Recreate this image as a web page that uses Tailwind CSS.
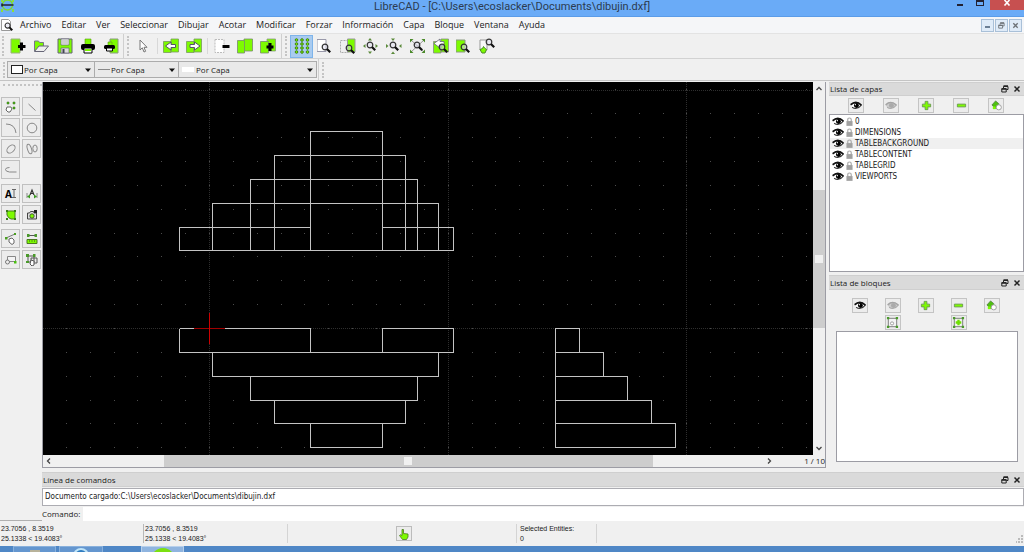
<!DOCTYPE html>
<html lang="es">
<head>
    <meta charset="UTF-8">
    <meta name="viewport" content="width=device-width, initial-scale=1.0">
    <title>LibreCAD - [C:\Users\ecoslacker\Documents\dibujin.dxf]</title>
    <script src="https://cdn.jsdelivr.net/npm/@tailwindcss/browser@4"></script>
</head>
<body class="h-screen overflow-hidden flex flex-col bg-[#f0f0f0] text-[#1a1a1a] font-['Open_Sans','Noto_Sans',sans-serif] text-[8px] leading-[12px]">

    <!-- Icon set -->
    <svg class="hidden">
        <defs>
            <symbol id="i-lens" viewBox="0 0 10 10"><circle cx="4" cy="4" r="2.800" fill="#dde" fill-opacity=".5" stroke="#333" stroke-width="1.200"/><path d="M6 6l3.200 3.200" stroke="#111" stroke-width="2.200"/></symbol>
            <symbol id="i-new" viewBox="0 0 16 16"><path d="M1 1h9v14H1z" fill="#7dfb00" stroke="#9ab080"/><path d="M11.500 4.500v8M8 8.500h7.500" stroke="#000" stroke-width="3"/></symbol>
            <symbol id="i-open" viewBox="0 0 16 16"><path d="M1.500 13V3h4l1 1.500h4V8" fill="#7dfb00" stroke="#778"/><path d="M1.500 13.500L6 8h9.500L11 13.500z" fill="#eee" stroke="#667"/></symbol>
            <symbol id="i-save" viewBox="0 0 16 16"><path d="M1 1h14v14H1z" fill="#7dfb00" stroke="#667"/><path d="M4 1h8v6H4z" fill="#f4f4f4" stroke="#667" stroke-width=".7"/><path d="M4 10h8v5H4z" fill="#ddd" stroke="#667" stroke-width=".7"/><path d="M5.500 11h2v4h-2z" fill="#445"/><path d="M5 3h6M5 5h6" stroke="#aaa"/></symbol>
            <symbol id="i-print" viewBox="0 0 16 16"><path d="M5 1h6v6H5z" fill="#7dfb00" stroke="#5a9a10" stroke-width=".6"/><rect x="1" y="6" width="14" height="6" rx="2"/><path d="M4 10h8v5H4z" fill="#fff" stroke="#000"/><path d="M5 11h6v2H5z" fill="#7dfb00"/></symbol>
            <symbol id="i-preview" viewBox="0 0 16 16"><path d="M7 1h8v14H7z" fill="#7dfb00" stroke="#8a9a80"/><path d="M5 4h4v4H5z" fill="#7dfb00" stroke="#5a9a10" stroke-width=".6"/><rect x="1" y="7" width="11" height="4" rx="1.500"/><path d="M3.500 10h6v3h-6z" fill="#fff" stroke="#000"/></symbol>
            <symbol id="i-cursor" viewBox="0 0 16 16"><path d="M5 2v10l2.300-2.200L9 14l1.600-.7L9 9.300h3z" fill="#fff" stroke="#777"/></symbol>
            <symbol id="i-prev" viewBox="0 0 16 16"><path d="M.5 3.500H8v11H.5zM8 1h7.500v13H8z" fill="#7dfb00" stroke="#7a9a60" stroke-width=".8"/><path d="M2.500 8l5.500-4v2.500h4.500v3H8V12z" fill="#fff" stroke="#556"/></symbol>
            <symbol id="i-next" viewBox="0 0 16 16"><path d="M.5 3.500H8v11H.5zM8 1h7.500v13H8z" fill="#7dfb00" stroke="#7a9a60" stroke-width=".8"/><path d="M14 8L8.500 4v2.500H4v3h4.500V12z" fill="#fff" stroke="#556"/></symbol>
            <symbol id="i-minuspage" viewBox="0 0 16 16"><path d="M1 1.500h9v13H1z" fill="#fff" stroke="#bbb" stroke-dasharray="2 1"/><path d="M8.500 8.500h7" stroke="#000" stroke-width="3"/></symbol>
            <symbol id="i-pages" viewBox="0 0 16 16"><path d="M7 1h8.500v12H7z" fill="#7dfb00" stroke="#7a8a70" stroke-width=".8"/><path d="M.5 2.500H7.500v12.500H.5z" fill="#7dfb00" stroke="#7a8a70" stroke-width=".8"/></symbol>
            <symbol id="i-pagesplus" viewBox="0 0 16 16"><path d="M7 1h8.500v12H7z" fill="#7dfb00" stroke="#8a9a80" stroke-width=".8"/><path d="M.5 3.500h8v11.500h-8z" fill="#7dfb00" stroke="#7a8a70" stroke-width=".8"/><path d="M10 5v8M6.500 9h7" stroke="#000" stroke-width="3"/></symbol>
            <symbol id="i-grid" viewBox="0 0 16 16"><g fill="#7dfb00" stroke="#3f7f14" stroke-width="1"><circle cx="2.500" cy="2" r="1.300"/><circle cx="8" cy="2" r="1.300"/><circle cx="13.500" cy="2" r="1.300"/><circle cx="2.500" cy="6" r="1.300"/><circle cx="8" cy="6" r="1.300"/><circle cx="13.500" cy="6" r="1.300"/><circle cx="2.500" cy="10" r="1.300"/><circle cx="8" cy="10" r="1.300"/><circle cx="13.500" cy="10" r="1.300"/><circle cx="2.500" cy="14" r="1.300"/><circle cx="8" cy="14" r="1.300"/><circle cx="13.500" cy="14" r="1.300"/></g></symbol>
            <symbol id="i-zoompage" viewBox="0 0 16 16"><path d="M0 1.500h9v12H0z" fill="#fff" stroke="#99a"/><use href="#i-lens" x="4" y="5" width="10" height="10"/></symbol>
            <symbol id="i-zoompages" viewBox="0 0 16 16"><path d="M.5 2.500H8v12H.5z" fill="#eee" stroke="#aaa" stroke-dasharray="2 1"/><path d="M7.500 1H15v13H7.500z" fill="#7dfb00" stroke="#999"/><use href="#i-lens" x="5" y="6" width="10" height="10"/></symbol>
            <symbol id="i-zoomin" viewBox="0 0 16 16"><path d="M7 0l2 2.500H5zM7 16l2-2.500H5zM0 8l2.500-2v4zM15 8l-2.500-2v4z" fill="#5a8a3a"/><use href="#i-lens" x="3" y="3" width="10" height="10"/></symbol>
            <symbol id="i-zoomout" viewBox="0 0 16 16"><path d="M7 3L5 .5h4zM7 13.500L5 16h4zM2.500 8L0 6v4zM13 8l2.500-2v4z" fill="#5a8a3a"/><use href="#i-lens" x="3" y="3" width="10" height="10"/></symbol>
            <symbol id="i-zoomauto" viewBox="0 0 16 16"><path d="M1 2l13 12M14 2L1 14" stroke="#999"/><path d="M0 1h3.500L0 4.500zM15 1v3.500L11.500 1zM0 15v-3.500L3.500 15zM15 15h-3.500l3.500-3.500z" fill="#4a8a2a"/><use href="#i-lens" x="3" y="3" width="10" height="10"/></symbol>
            <symbol id="i-zoomprev" viewBox="0 0 16 16"><path d="M.5 3.500H8v11.500H.5zM8 1h7.500v13H8z" fill="#7dfb00" stroke="#888" stroke-width=".8"/><path d="M1 5.500L7 1v2.500h4v4H7V10z" fill="#fff" stroke="#667" stroke-width=".8"/><use href="#i-lens" x="5" y="5" width="10" height="10"/></symbol>
            <symbol id="i-zoomwin" viewBox="0 0 16 16"><path d="M0 2h9v12H0z" fill="#7dfb00" stroke="#8a9a80"/><use href="#i-lens" x="4" y="5" width="10" height="10"/></symbol>
            <symbol id="i-zoompan" viewBox="0 0 16 16"><path d="M1 2h7v10H1z" fill="#f8f8f8" stroke="#999"/><use href="#i-lens" x="6" y="0" width="10" height="10"/><path d="M1 11.500l2.500-1 1-2 1 1.500 2 1.500-1.500 3.500H3z" fill="#7dfb00" stroke="#4a8a2a"/></symbol>
            <symbol id="i-eye" viewBox="0 0 14 10"><path d="M.8 4.500Q7-1.500 13.200 4.500Q8 11 2.500 7" fill="#fff" stroke="#333" stroke-width="1.200"/><path d="M.8 4Q7-1.500 13.200 4.500" fill="none" stroke="#111" stroke-width="2"/><circle cx="7.500" cy="5" r="2.900" fill="#000"/><circle cx="6.400" cy="4" r=".7" fill="#fff"/></symbol>
            <symbol id="i-eyeoff" viewBox="0 0 14 10"><path d="M.8 4.500Q7-1.500 13.200 4.500Q8 11 2.500 7" fill="#ccc" stroke="#aaa" stroke-width="1.200"/><path d="M.8 4Q7-1.500 13.200 4.500" fill="none" stroke="#a4a4a4" stroke-width="1.600"/><circle cx="7.500" cy="5" r="2.900" fill="#aaa"/></symbol>
            <symbol id="i-lock" viewBox="0 0 8 10"><path d="M2 5V3q0-2 2-2t2 2v2" fill="none" stroke="#aaa" stroke-width="1.400"/><path d="M.5 4.500h7V10h-7z" fill="#a0a0a0"/></symbol>
            <symbol id="i-plus" viewBox="0 0 12 12"><path d="M4.500 1.500h3v3h3v3h-3v3h-3v-3h-3v-3h3z" fill="#7dfb00" stroke="#6a9a50"/></symbol>
            <symbol id="i-minus" viewBox="0 0 12 12"><path d="M1.500 4.500h9v3h-9z" fill="#7dfb00" stroke="#6a9a50"/></symbol>
            <symbol id="i-edit" viewBox="0 0 12 12"><path d="M1 5.500L5 1l3.500 3v3l-3 2.500z" fill="#4fc010" stroke="#4a7a3a" stroke-width=".8"/><circle cx="8.500" cy="8" r="2.800" fill="#fff" stroke="#999"/><path d="M2 7h3v3H2z" fill="#7dfb00"/></symbol>
            <symbol id="i-blockedit" viewBox="0 0 14 14"><path d="M2.500 2.500h9v9h-9z" fill="#f4f4f4" stroke="#777"/><circle cx="6.500" cy="8" r="1.700" fill="#fff" stroke="#999"/><path d="M1 1h2.500v2.500H1zM10.500 1H13v2.500h-2.500zM1 10.500h2.500V13H1zM10.500 10.500H13V13h-2.500z" fill="#4a9a2a"/></symbol>
            <symbol id="i-blockadd" viewBox="0 0 14 14"><path d="M2.500 2.500h9v9h-9z" fill="#f0f4ec" stroke="#777"/><path d="M7 4v6M4 7h6" stroke="#6ee000" stroke-width="2.500"/><path d="M1 1h2.500v2.500H1zM10.500 1H13v2.500h-2.500zM1 10.500h2.500V13H1zM10.500 10.500H13V13h-2.500z" fill="#4a9a2a"/></symbol>
            <symbol id="i-float" viewBox="0 0 8 8"><path d="M2.500 3V1.500h4.500v3H5.500" fill="none" stroke="#222"/><path d="M2.500 1h4.500" stroke="#222" stroke-width="1.500"/><path d="M.8 4h4.400v3H.8z" fill="none" stroke="#222"/><path d="M.5 3.800h5" stroke="#222" stroke-width="1.500"/></symbol>
            <symbol id="i-close" viewBox="0 0 8 8"><path d="M1.500 1.500l5 5M6.500 1.500l-5 5" stroke="#222" stroke-width="1.500"/></symbol>
            <symbol id="i-down" viewBox="0 0 6 4"><path d="M0 .5h6L3 4z" fill="#111"/></symbol>
        </defs>
    </svg>

    <!-- Title bar -->
    <header class="h-[17px] shrink-0 flex items-start bg-[#6aabf7] border-b border-[#5b9ce8]">
        <svg class="w-4 h-3" viewBox="0 0 16 12"><circle cx="7.500" cy="5" r="5" fill="none" stroke="#7fd832" stroke-width="1.500"/><path d="M2 0v2M13 0v2M2 9v3M13 9v3" stroke="#8be03a" stroke-width="2"/><path d="M1.500 5h12M2 3.500v3" stroke="#223" stroke-width="1.600"/></svg>
        <h1 class="flex-1 text-center font-['Roboto',sans-serif] text-[11px] leading-[13px] pl-[58px] text-[#2c3b50]">LibreCAD - [C:\Users\ecoslacker\Documents\dibujin.dxf]</h1>
        <div class="flex h-[10px]">
            <button aria-label="Minimizar" class="w-[20px] flex justify-center"><span class="w-[6px] h-[2px] mt-[4px] bg-[#223]"></span></button>
            <button aria-label="Maximizar" class="w-[20px] flex justify-center"><span class="w-[8px] h-[6px] border border-t-2 border-[#223]"></span></button>
            <button aria-label="Cerrar" class="w-[34px] flex justify-center bg-[#c75050]"><svg class="w-2 h-[6px]" viewBox="0 0 8 6"><path d="M1.500 0l5 5.500M6.500 0l-5 5.500" stroke="#fff" stroke-width="1.600"/></svg></button>
        </div>
    </header>

    <!-- Menu bar -->
    <nav class="h-[17px] shrink-0 flex items-center gap-[10px] text-[9px] bg-[#f5f6f8] border-b border-[#e3e3e3] pr-[2px]">
        <svg class="w-3 h-3 ml-[1px] -mr-[3px]" viewBox="0 0 12 12"><path d="M.5.500h7l2 2v9h-9z" fill="#fff" stroke="#999"/><use href="#i-lens" x="3" y="3" width="9" height="9"/></svg>
        <a href="#">Archivo</a>
        <a href="#">Editar</a>
        <a href="#">Ver</a>
        <a href="#">Seleccionar</a>
        <a href="#">Dibujar</a>
        <a href="#">Acotar</a>
        <a href="#">Modificar</a>
        <a href="#">Forzar</a>
        <a href="#">Información</a>
        <a href="#">Capa</a>
        <a href="#">Bloque</a>
        <a href="#">Ventana</a>
        <a href="#">Ayuda</a>
        <div class="ml-auto flex gap-[1px]">
            <button aria-label="Minimizar documento" class="w-[13px] h-[13px] border border-[#a9c0d8] bg-[#dfebf8] flex items-center justify-center"><span class="w-[5px] h-[2px] mt-[4px] bg-[#6c7f95]"></span></button>
            <button aria-label="Restaurar documento" class="w-[13px] h-[13px] border border-[#a9c0d8] bg-[#dfebf8] flex items-center justify-center"><svg class="w-[7px] h-[7px] opacity-60"><use href="#i-float"/></svg></button>
            <button aria-label="Cerrar documento" class="w-[13px] h-[13px] border border-[#a9c0d8] bg-[#dfebf8] flex items-center justify-center"><svg class="w-[7px] h-[7px] opacity-60"><use href="#i-close"/></svg></button>
        </div>
    </nav>

    <!-- Main toolbar -->
    <div class="h-[25px] shrink-0 flex items-center border-b border-[#d2d2d2] bg-[#f0f0f0]">
        <span class="w-[2px] h-5 mx-[2px] border-l-2 border-dotted border-[#c4c4c4]"></span>
        <div class="w-[118px] h-full flex border-r border-[#cfcfcf]">
            <button aria-label="Nuevo" class="flex-1 flex items-center justify-center"><svg class="w-4 h-4"><use href="#i-new"/></svg></button>
            <button aria-label="Abrir" class="flex-1 flex items-center justify-center"><svg class="w-4 h-4"><use href="#i-open"/></svg></button>
            <button aria-label="Guardar" class="flex-1 flex items-center justify-center"><svg class="w-4 h-4"><use href="#i-save"/></svg></button>
            <button aria-label="Imprimir" class="flex-1 flex items-center justify-center"><svg class="w-4 h-4"><use href="#i-print"/></svg></button>
            <button aria-label="Vista previa" class="flex-1 flex items-center justify-center"><svg class="w-4 h-4"><use href="#i-preview"/></svg></button>
        </div>
        <span class="w-[2px] h-5 ml-[3px] border-l-2 border-dotted border-[#c4c4c4]"></span>
        <button aria-label="Seleccionar" class="w-[28px] h-full flex items-center justify-center"><svg class="w-4 h-4"><use href="#i-cursor"/></svg></button>
        <div class="w-[51px] h-4 px-[2px] flex items-center border-x border-[#d8d8d8]">
            <button aria-label="Deshacer" class="flex-1 flex justify-center"><svg class="w-4 h-4"><use href="#i-prev"/></svg></button>
            <button aria-label="Rehacer" class="flex-1 flex justify-center"><svg class="w-4 h-4"><use href="#i-next"/></svg></button>
        </div>
        <div class="w-[74px] h-full px-[2px] flex items-center border-r border-[#cfcfcf]">
            <button aria-label="Cortar" class="flex-1 flex justify-center"><svg class="w-4 h-4"><use href="#i-minuspage"/></svg></button>
            <button aria-label="Copiar" class="flex-1 flex justify-center"><svg class="w-4 h-4"><use href="#i-pages"/></svg></button>
            <button aria-label="Pegar" class="flex-1 flex justify-center"><svg class="w-4 h-4"><use href="#i-pagesplus"/></svg></button>
        </div>
        <span class="w-[2px] h-5 mx-[3px] border-l-2 border-dotted border-[#c4c4c4]"></span>
        <div class="w-[209px] h-[23px] flex">
            <button aria-label="Cuadrícula" aria-pressed="true" class="w-[23px] flex items-center justify-center border border-[#7eb4ea] bg-[#a9cbf0]"><svg class="w-4 h-4"><use href="#i-grid"/></svg></button>
            <button aria-label="Redibujar" class="flex-1 flex items-center justify-center"><svg class="w-4 h-4"><use href="#i-zoompage"/></svg></button>
            <button aria-label="Zoom páginas" class="flex-1 flex items-center justify-center"><svg class="w-4 h-4"><use href="#i-zoompages"/></svg></button>
            <button aria-label="Acercar" class="flex-1 flex items-center justify-center"><svg class="w-4 h-4"><use href="#i-zoomin"/></svg></button>
            <button aria-label="Alejar" class="flex-1 flex items-center justify-center"><svg class="w-4 h-4"><use href="#i-zoomout"/></svg></button>
            <button aria-label="Zoom automático" class="flex-1 flex items-center justify-center"><svg class="w-4 h-4"><use href="#i-zoomauto"/></svg></button>
            <button aria-label="Zoom anterior" class="flex-1 flex items-center justify-center"><svg class="w-4 h-4"><use href="#i-zoomprev"/></svg></button>
            <button aria-label="Zoom ventana" class="flex-1 flex items-center justify-center"><svg class="w-4 h-4"><use href="#i-zoomwin"/></svg></button>
            <button aria-label="Desplazar" class="flex-1 flex items-center justify-center"><svg class="w-4 h-4"><use href="#i-zoompan"/></svg></button>
        </div>
    </div>

    <!-- Pen toolbar -->
    <div class="h-[22px] shrink-0 flex items-center border-b border-[#c4c4c4]">
        <span class="w-[2px] h-4 ml-[3px] mr-[2px] border-l-2 border-dotted border-[#c4c4c4]"></span>
        <div class="w-[88px] h-[17px] flex items-center border border-[#acacac] bg-[#e9e9e9] pl-[3px] pr-[3px]">
            <span class="w-3 h-[9px] mr-[1px] border border-[#222] bg-white"></span>
            <select aria-label="Color" class="flex-1 min-w-0 appearance-none bg-transparent"><option>Por Capa</option></select>
            <svg class="w-[6px] h-1"><use href="#i-down"/></svg>
        </div>
        <div class="w-[84px] h-[17px] flex items-center border border-l-0 border-[#acacac] bg-[#e9e9e9] pl-[3px] pr-[3px]">
            <span class="w-3 h-[1px] mr-[1px] bg-[#888]"></span>
            <select aria-label="Ancho" class="flex-1 min-w-0 appearance-none bg-transparent"><option>Por Capa</option></select>
            <svg class="w-[6px] h-1"><use href="#i-down"/></svg>
        </div>
        <div class="w-[138px] h-[17px] flex items-center border border-l-0 border-[#acacac] bg-[#e9e9e9] pl-[3px] pr-[3px]">
            <span class="w-3 h-[5px] mr-[2px] bg-white"></span>
            <select aria-label="Tipo de línea" class="flex-1 min-w-0 appearance-none bg-transparent"><option>Por Capa</option></select>
            <svg class="w-[6px] h-1"><use href="#i-down"/></svg>
        </div>
        <span class="w-[1px] h-full ml-[1px] bg-[#cfcfcf]"></span>
        <span class="w-[2px] h-4 ml-[3px] border-l-2 border-dotted border-[#c4c4c4]"></span>
    </div>

    <div class="flex-1 min-h-0 flex">
        <!-- Draw tools -->
        <aside class="w-[42px] shrink-0 border-b border-[#b0b0b0] pl-[1px]">
            <div class="h-[2px] mt-[3px] ml-[2px] border-t-2 border-dotted border-[#c4c4c4]"></div>
            <div class="mt-[11px] grid grid-cols-[19px_19px] gap-[2px]">
                <button aria-label="Puntos" class="h-[19px] border border-[#c0c0c0] bg-[#ececec] flex items-center justify-center"><svg class="w-3 h-3" viewBox="0 0 12 12"><path d="M2 1h2v2H2zM8 1h2v2H8zM8 6h2v2H8z" fill="#4ac010" stroke="#386a20" stroke-width=".5"/><path d="M2 6h4l1 2-2 3H3L1 9z" fill="#fff" stroke="#666"/></svg></button>
                <button aria-label="Líneas" class="h-[19px] border border-[#c0c0c0] bg-[#ececec] flex items-center justify-center"><svg class="w-3 h-3" viewBox="0 0 12 12"><path d="M2.500 3l7 6.500" stroke="#888"/></svg></button>
                <button aria-label="Arcos" class="h-[19px] border border-[#c0c0c0] bg-[#ececec] flex items-center justify-center"><svg class="w-3 h-3" viewBox="0 0 12 12"><path d="M1 2q9 0 10 9" fill="none" stroke="#888"/></svg></button>
                <button aria-label="Círculos" class="h-[19px] border border-[#c0c0c0] bg-[#ececec] flex items-center justify-center"><svg class="w-3 h-3" viewBox="0 0 12 12"><circle cx="6" cy="6" r="4.800" fill="none" stroke="#888"/></svg></button>
                <button aria-label="Elipses" class="h-[19px] border border-[#c0c0c0] bg-[#ececec] flex items-center justify-center"><svg class="w-3 h-3" viewBox="0 0 12 12"><ellipse cx="6" cy="6" rx="4.800" ry="3.200" transform="rotate(-45 6 6)" fill="none" stroke="#888"/></svg></button>
                <button aria-label="Splines" class="h-[19px] border border-[#c0c0c0] bg-[#ececec] flex items-center justify-center"><svg class="w-3 h-3" viewBox="0 0 12 12"><ellipse cx="3.500" cy="6" rx="2" ry="5" transform="rotate(-18 3.500 6)" fill="none" stroke="#888"/><ellipse cx="9" cy="5.500" rx="2.200" ry="3.500" fill="none" stroke="#888"/></svg></button>
                <button aria-label="Polilíneas" class="h-[19px] border border-[#c0c0c0] bg-[#ececec] flex items-center justify-center"><svg class="w-3 h-3" viewBox="0 0 12 12"><path d="M4.500 3.500q-4 0-4 2t4 2.500h7" fill="none" stroke="#888"/></svg></button>
            </div>
            <div class="mt-[5px] grid grid-cols-[19px_19px] gap-[2px]">
                <button aria-label="Texto" class="h-[19px] border border-[#c0c0c0] bg-[#ececec] flex items-center justify-center text-[10px] font-bold text-black">A<svg class="w-1 h-[9px]" viewBox="0 0 4 9"><path d="M0 .5h4M2 .5v8M0 8.500h4" stroke="#666"/></svg></button>
                <button aria-label="Cotas" class="h-[19px] border border-[#c0c0c0] bg-[#ececec] flex items-center justify-center"><svg class="w-3 h-3" viewBox="0 0 12 12"><path d="M4 7l2-5 2 5M4.500 5.500h3" fill="none" stroke="#333" stroke-width="1.200"/><path d="M1 5v5M11 5v5" stroke="#888"/><path d="M1 8.500l3-2v4zM11 8.500l-3-2v4z" fill="#3a9a20"/></svg></button>
                <button aria-label="Sombreado" class="h-[19px] border border-[#c0c0c0] bg-[#ececec] flex items-center justify-center"><svg class="w-3 h-3" viewBox="0 0 12 12"><path d="M2 2h8v8H6Q3 9 2 6z" fill="#7dfb00" stroke="#4a7a20"/><path d="M1 1h2v2H1zM9 1h2v2H9zM9 9h2v2H9zM1 9h2v2H1z" fill="#3a7a1a"/></svg></button>
                <button aria-label="Imagen" class="h-[19px] border border-[#c0c0c0] bg-[#ececec] flex items-center justify-center"><svg class="w-3 h-3" viewBox="0 0 12 12"><path d="M1.500 4h2l1-1.500h3L8 4h2.500v6h-9z" fill="#ddd" stroke="#444"/><circle cx="6" cy="7" r="2.200" fill="#7dfb00" stroke="#333" stroke-width=".8"/><path d="M8 1h3v3H8z" fill="#222"/></svg></button>
            </div>
            <div class="mt-[5px] grid grid-cols-[19px_19px] gap-[2px]">
                <button aria-label="Modificar" class="h-[19px] border border-[#c0c0c0] bg-[#ececec] flex items-center justify-center"><svg class="w-3 h-3" viewBox="0 0 12 12"><path d="M1 5l9-4" stroke="#777"/><path d="M0 4h2.500v2.500H0zM9 0h2v2H9z" fill="#4aa020"/><path d="M4 6l3-1 2 2v3l-2 1.500L4 9z" fill="#fff" stroke="#666"/></svg></button>
                <button aria-label="Información" class="h-[19px] border border-[#c0c0c0] bg-[#ececec] flex items-center justify-center"><svg class="w-3 h-3" viewBox="0 0 12 12"><path d="M1.500 2.500h9" stroke="#555"/><path d="M1 1h2.500v3H1zM8.500 1H11v3H8.500z" fill="#4a9a2a"/><path d="M1 6.500h10v4H1z" fill="#7dfb00" stroke="#4a7a20"/><path d="M3.500 7v2M6 7v2M8.500 7v2" stroke="#4a7a20" stroke-width=".7"/></svg></button>
                <button aria-label="Bloque" class="h-[19px] border border-[#c0c0c0] bg-[#ececec] flex items-center justify-center"><svg class="w-3 h-3" viewBox="0 0 12 12"><path d="M2.500 2.500h8v5h-8z" fill="#f4f4f4" stroke="#888"/><circle cx="2.500" cy="8" r="2" fill="#eee" stroke="#777"/><path d="M9 7h2.500v2.500H9z" fill="#4ac010"/></svg></button>
                <button aria-label="Seleccionar entidades" class="h-[19px] border border-[#c0c0c0] bg-[#ececec] flex items-center justify-center"><svg class="w-3 h-3" viewBox="0 0 12 12"><path d="M2 2h6v6H2zM5 4h6v5H5z" fill="none" stroke="#555"/><path d="M0 0h3v3H0zM7 0h2.500v3H7zM0 7h3v2H0z" fill="#4a9a2a"/><path d="M5 6l3 1v4L6 12 4 10z" fill="#fff" stroke="#555"/></svg></button>
            </div>
        </aside>

        <div class="flex-1 min-w-0 flex flex-col">
            <div class="flex-1 min-h-0 flex">
                <!-- Drawing area -->
                <main class="flex-1 min-w-0 mt-[1px] grid grid-cols-[1fr_12px] grid-rows-[1fr_12px] border border-t-0 border-[#9c9ca4]">
                    <svg id="drawing" class="w-full h-full min-h-0 bg-black" shape-rendering="crispEdges">
                        <g id="grid" fill="#4c4c4c"></g>
                        <g stroke="#2e2e2e" stroke-dasharray="1 1">
                            <path d="M0 8.500h2000M0 246.500h2000M166.500 0v2000M405.500 0v2000M643.500 0v2000"/>
                        </g>
                        <!-- front view -->
                        <g fill="none" stroke="#c4c4c4">
                            <path d="M267.500 168.500v-119h72v119"/>
                            <path d="M231.500 168.500v-95h131v95"/>
                            <path d="M207.500 168.500v-71h167v71"/>
                            <path d="M169.500 168.500v-47h226v47"/>
                            <path d="M267.500 145.500h-131v23h274v-23h-71"/>
                        </g>
                        <!-- plan -->
                        <g fill="none" stroke="#c4c4c4">
                            <path d="M136.500 246.500h131v24M339.500 270.500v-24h71v24h-274v-24"/>
                            <path d="M169.500 270.500v24h226v-24"/>
                            <path d="M207.500 294.500v24h167v-24"/>
                            <path d="M231.500 318.500v23h131v-23"/>
                            <path d="M267.500 341.500v24h72v-24"/>
                        </g>
                        <!-- side view -->
                        <g fill="none" stroke="#c4c4c4">
                            <path d="M512.500 246.500h24v24h24v24h24v24h24v23h24v24h-120z"/>
                            <path d="M512.500 270.500h24M512.500 294.500h48M512.500 318.500h72M512.500 341.500h96"/>
                        </g>
                        <!-- origin -->
                        <g id="origin" fill="#cc0000">
                            <rect x="151" y="246" width="31" height="1" fill="#a00000"/>
                            <rect x="166" y="231" width="1" height="31"/>
                        </g>
                    </svg>
                    <div class="flex flex-col items-center justify-between py-[4px] relative">
                        <svg class="w-[6px] h-[5px]" viewBox="0 0 6 5"><path d="M.5 4L3 1.500 5.500 4" fill="none" stroke="#444" stroke-width="1.300"/></svg>
                        <div class="absolute inset-x-0 top-[29%] h-[37%] bg-[#cdcdcd] flex items-center justify-center"><span class="w-2 h-2 bg-[#f0f0f0]"></span></div>
                        <svg class="w-[6px] h-[5px]" viewBox="0 0 6 5"><path d="M.5 1L3 3.500 5.500 1" fill="none" stroke="#444" stroke-width="1.300"/></svg>
                    </div>
                    <div class="col-span-2 flex items-center">
                        <div class="flex-1 h-full flex items-center justify-between pl-[3px] pr-[2px] relative">
                            <svg class="w-[5px] h-[6px]" viewBox="0 0 5 6"><path d="M4 .5L1.500 3 4 5.500" fill="none" stroke="#444" stroke-width="1.300"/></svg>
                            <div class="absolute inset-y-0 left-[16.500%] w-[67%] bg-[#cdcdcd] flex items-center justify-center"><span class="w-2 h-2 bg-[#f0f0f0]"></span></div>
                            <svg class="w-[5px] h-[6px]" viewBox="0 0 5 6"><path d="M1 .5L3.500 3 1 5.500" fill="none" stroke="#444" stroke-width="1.300"/></svg>
                        </div>
                        <span class="w-[51px] text-right">1 / 10</span>
                    </div>
                </main>

                <!-- Docks -->
                <aside class="w-[198px] shrink-0 pl-[3px] mt-[1px] flex flex-col">
                    <section class="flex flex-col h-[190px]">
                        <div class="h-[14px] shrink-0 flex items-center bg-[#dadada] border-y border-[#cfcfcf] pl-[1px] pr-[3px]">
                            <h2 class="flex-1">Lista de capas</h2>
                            <button aria-label="Flotar capas"><svg class="w-2 h-2"><use href="#i-float"/></svg></button>
                            <button aria-label="Cerrar capas" class="ml-[4px]"><svg class="w-2 h-2"><use href="#i-close"/></svg></button>
                        </div>
                        <div class="flex justify-between mt-[2px] pl-[19px] pr-[20px]">
                            <button aria-label="Mostrar capas" class="w-4 h-[15px] border border-[#c4c4c4] bg-[#ececec] flex items-center justify-center"><svg class="w-3 h-[9px]"><use href="#i-eye"/></svg></button>
                            <button aria-label="Ocultar capas" class="w-4 h-[15px] border border-[#c4c4c4] bg-[#ececec] flex items-center justify-center"><svg class="w-3 h-[9px]"><use href="#i-eyeoff"/></svg></button>
                            <button aria-label="Añadir capa" class="w-4 h-[15px] border border-[#c4c4c4] bg-[#ececec] flex items-center justify-center"><svg class="w-[11px] h-[11px]"><use href="#i-plus"/></svg></button>
                            <button aria-label="Quitar capa" class="w-4 h-[15px] border border-[#c4c4c4] bg-[#ececec] flex items-center justify-center"><svg class="w-[11px] h-[11px]"><use href="#i-minus"/></svg></button>
                            <button aria-label="Editar capa" class="w-4 h-[15px] border border-[#c4c4c4] bg-[#ececec] flex items-center justify-center"><svg class="w-[11px] h-[11px]"><use href="#i-edit"/></svg></button>
                        </div>
                        <ul class="flex-1 mt-[1px] pt-[1px] border border-[#9c9ca4] bg-white font-['DejaVu_Sans_Condensed','DejaVu_Sans',sans-serif] leading-[11px]">
                            <li class="h-[11px] flex items-center pl-[2px]"><svg class="w-3 h-[9px] mr-[2px]"><use href="#i-eye"/></svg><svg class="w-[7px] h-[9px] mr-[2px]"><use href="#i-lock"/></svg>0</li>
                            <li class="h-[11px] flex items-center pl-[2px]"><svg class="w-3 h-[9px] mr-[2px]"><use href="#i-eye"/></svg><svg class="w-[7px] h-[9px] mr-[2px]"><use href="#i-lock"/></svg>DIMENSIONS</li>
                            <li class="h-[11px] flex items-center pl-[2px] bg-[#f0f0f0]"><svg class="w-3 h-[9px] mr-[2px]"><use href="#i-eye"/></svg><svg class="w-[7px] h-[9px] mr-[2px]"><use href="#i-lock"/></svg>TABLEBACKGROUND</li>
                            <li class="h-[11px] flex items-center pl-[2px]"><svg class="w-3 h-[9px] mr-[2px]"><use href="#i-eye"/></svg><svg class="w-[7px] h-[9px] mr-[2px]"><use href="#i-lock"/></svg>TABLECONTENT</li>
                            <li class="h-[11px] flex items-center pl-[2px]"><svg class="w-3 h-[9px] mr-[2px]"><use href="#i-eye"/></svg><svg class="w-[7px] h-[9px] mr-[2px]"><use href="#i-lock"/></svg>TABLEGRID</li>
                            <li class="h-[11px] flex items-center pl-[2px]"><svg class="w-3 h-[9px] mr-[2px]"><use href="#i-eye"/></svg><svg class="w-[7px] h-[9px] mr-[2px]"><use href="#i-lock"/></svg>VIEWPORTS</li>
                        </ul>
                    </section>
                    <section class="flex-1 mt-[3px] mb-[6px] flex flex-col">
                        <div class="h-[15px] shrink-0 flex items-center bg-[#dadada] border-y border-[#cfcfcf] pl-[1px] pr-[3px]">
                            <h2 class="flex-1">Lista de bloques</h2>
                            <button aria-label="Flotar bloques"><svg class="w-2 h-2"><use href="#i-float"/></svg></button>
                            <button aria-label="Cerrar bloques" class="ml-[4px]"><svg class="w-2 h-2"><use href="#i-close"/></svg></button>
                        </div>
                        <div class="grid grid-cols-5 justify-items-center gap-y-[2px] mt-2 pl-[14px] pr-4">
                            <button aria-label="Mostrar bloques" class="w-4 h-[15px] border border-[#c4c4c4] bg-[#ececec] flex items-center justify-center"><svg class="w-3 h-[9px]"><use href="#i-eye"/></svg></button>
                            <button aria-label="Ocultar bloques" class="w-4 h-[15px] border border-[#c4c4c4] bg-[#ececec] flex items-center justify-center"><svg class="w-3 h-[9px]"><use href="#i-eyeoff"/></svg></button>
                            <button aria-label="Añadir bloque" class="w-4 h-[15px] border border-[#c4c4c4] bg-[#ececec] flex items-center justify-center"><svg class="w-[11px] h-[11px]"><use href="#i-plus"/></svg></button>
                            <button aria-label="Quitar bloque" class="w-4 h-[15px] border border-[#c4c4c4] bg-[#ececec] flex items-center justify-center"><svg class="w-[11px] h-[11px]"><use href="#i-minus"/></svg></button>
                            <button aria-label="Renombrar bloque" class="w-4 h-[15px] border border-[#c4c4c4] bg-[#ececec] flex items-center justify-center"><svg class="w-[11px] h-[11px]"><use href="#i-edit"/></svg></button>
                            <button aria-label="Editar bloque" class="col-start-2 w-4 h-[15px] border border-[#c4c4c4] bg-[#ececec] flex items-center justify-center"><svg class="w-[13px] h-[13px]"><use href="#i-blockedit"/></svg></button>
                            <button aria-label="Insertar bloque" class="col-start-4 w-4 h-[15px] border border-[#c4c4c4] bg-[#ececec] flex items-center justify-center"><svg class="w-[13px] h-[13px]"><use href="#i-blockadd"/></svg></button>
                        </div>
                        <div class="flex-1 mt-[1px] ml-[7px] mr-[6px] border border-[#9c9ca4] bg-white"></div>
                    </section>
                </aside>
            </div>

            <!-- Command line -->
            <section class="mt-[4px]">
                <div class="h-[15px] flex items-center bg-[#dadada] border-y border-[#cfcfcf] pl-[1px] pr-[3px]">
                    <h2 class="flex-1">Línea de comandos</h2>
                    <button aria-label="Flotar comandos"><svg class="w-2 h-2"><use href="#i-float"/></svg></button>
                    <button aria-label="Cerrar comandos" class="ml-[4px]"><svg class="w-2 h-2"><use href="#i-close"/></svg></button>
                </div>
                <p class="h-[18px] mt-[1px] pl-[2px] flex items-center border border-[#acacb2] bg-white font-['DejaVu_Sans_Condensed','DejaVu_Sans',sans-serif]">Documento cargado:C:\Users\ecoslacker\Documents\dibujin.dxf</p>
                <div class="h-[15px] pt-[1px] flex items-center">
                    <label for="command" class="w-[41px]">Comando:</label>
                    <input id="command" type="text" class="flex-1 h-full bg-white outline-none">
                </div>
            </section>
        </div>
    </div>

    <!-- Status bar -->
    <footer class="h-[25px] shrink-0 flex py-[3px] font-['Liberation_Sans',sans-serif] text-[7px] leading-[10px]">
        <div class="w-[143px] pl-[1px]"><p>23.7056 , 8.3519</p><p>25.1338 &lt; 19.4083°</p></div>
        <div class="w-[144px] pl-[1px] border-l border-[#b8b8b8]"><p>23.7056 , 8.3519</p><p>25.1338 &lt; 19.4083°</p></div>
        <div class="w-[229px] pl-[3px] border-l border-[#d4d4d4] flex items-center justify-center">
            <button aria-label="Ratón" class="w-4 h-[15px] border border-[#bcbcbc] bg-[#ececec] flex items-center justify-center"><svg class="w-3 h-3" viewBox="0 0 12 12"><path d="M4 1.500h1.500v4l4.500.5v3l-1.500 2.500h-4L1.500 7.500l1-.8L4 7.500z" fill="#7dfb00" stroke="#4a7a20" stroke-width=".8"/></svg></button>
        </div>
        <div class="w-[81px] pl-[3px] border-x border-[#d4d4d4]"><p>Selected Entities:</p><p>0</p></div>
        <svg class="w-2 h-2 ml-auto mt-auto" viewBox="0 0 8 8"><path d="M5 0h2v2H5zM5 3h2v2H5zM5 6h2v2H5zM2 3h2v2H2zM2 6h2v2H2zM-1 6h2v2h-2z" fill="#bbb"/></svg>
    </footer>

    <!-- Taskbar -->
    <div class="h-[6px] shrink-0 flex bg-[#4f87c6] pl-[13px]">
        <div class="w-[43px] border border-b-0 border-[#88b0dc] bg-[#6496cf] flex justify-center"><span class="w-[10px] h-[2px] mt-[3px] bg-[#b8b29a]"></span></div>
        <div class="w-[44px] ml-[3px] border border-b-0 border-[#88b0dc] bg-[#6496cf] flex justify-center overflow-hidden"><span class="w-4 h-4 mt-[1px] shrink-0 rounded-full border-2 border-[#bfe4f8] bg-[#2f7cc0]"></span></div>
        <div class="w-[43px] ml-[38px] border border-b-0 border-[#b8d0ec] bg-[#8fb4df] flex justify-center overflow-hidden"><span class="w-6 h-6 mt-[1px] shrink-0 rounded-full border-4 border-[#7be010] bg-[#a8cc9a]"></span></div>
    </div>

    <script>
        // grid dots, one unit apart, origin at 166,246
        const grid = document.getElementById('grid');
        const step = 23.87;
        for (let i = -6; i < 70; i++) {
            for (let j = -10; j < 40; j++) {
                const dot = document.createElementNS('http://www.w3.org/2000/svg', 'rect');
                dot.setAttribute('x', Math.round(166 + i * step));
                dot.setAttribute('y', Math.round(246 + j * step));
                dot.setAttribute('width', 1);
                dot.setAttribute('height', 1);
                grid.appendChild(dot);
            }
        }
    </script>
</body>
</html>
